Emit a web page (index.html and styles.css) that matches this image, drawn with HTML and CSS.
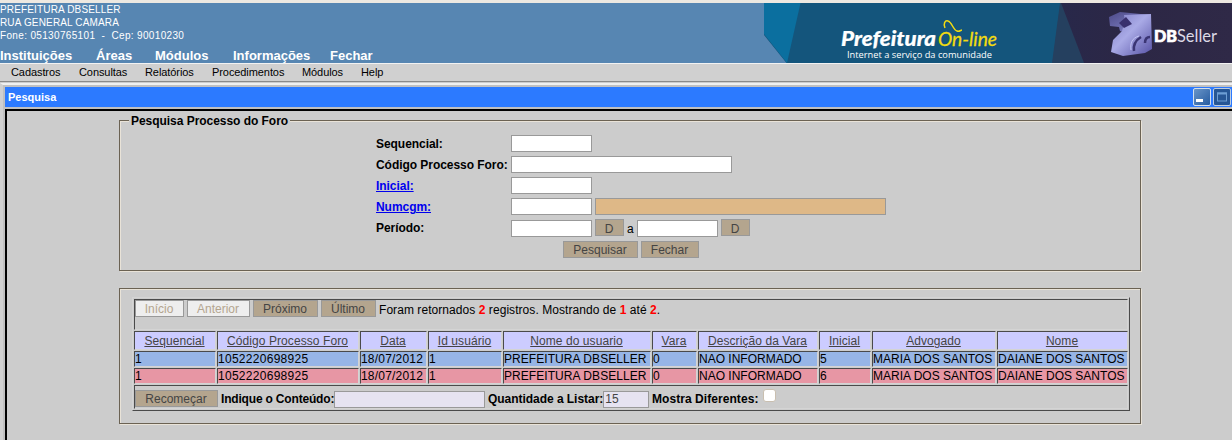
FILE: index.html
```html
<!DOCTYPE html>
<html lang="pt-BR">
<head>
<meta charset="utf-8">
<title>Pesquisa</title>
<link rel="stylesheet" href="styles.css">
</head>
<body>
<header class="top">
  <div class="top-left">
    <address class="org">PREFEITURA DBSELLER<br>RUA GENERAL CAMARA<br><span class="phone">Fone: 05130765101 &nbsp;-&nbsp; Cep: 90010230</span></address>
    <nav class="modules"><a>Instituições</a><a>Áreas</a><a>Módulos</a><a>Informações</a><a>Fechar</a></nav>
  </div>
  <svg class="banner" width="468" height="60" viewBox="764 3 468 60">
    <defs>
      <linearGradient id="night" x1="0" x2="1"><stop offset="0" stop-color="#28284a"/><stop offset=".4" stop-color="#2c2745"/><stop offset="1" stop-color="#2f2947"/></linearGradient>
      <linearGradient id="cube" x1="0" y1="0" x2="1" y2="1"><stop offset="0" stop-color="#7e7cc4"/><stop offset=".45" stop-color="#a9aae6"/><stop offset="1" stop-color="#5550a4"/></linearGradient>
      <linearGradient id="cubeSide" x1="0" y1="0" x2="1" y2="1"><stop offset="0" stop-color="#4d4a88"/><stop offset="1" stop-color="#8e90d6"/></linearGradient>
    </defs>
    <path fill="#14557c" d="M764 3h468v60H786.500L764 35z"/>
    <path fill="#0b6f9f" d="M764 3h36.500L787 63 764 34z"/>
    <path fill="#25405f" d="M1060 3h30v60h-38z"/>
    <path fill="url(#night)" d="M1061 3h171v60h-148z"/>
    <text class="brand-main" x="841" y="46" textLength="95" lengthAdjust="spacingAndGlyphs">Prefeitura</text>
    <text class="brand-on" x="938" y="46" textLength="59" lengthAdjust="spacingAndGlyphs">On-line</text>
    <path fill="none" stroke="#f3dc10" stroke-width="1.500" d="M945 28c-2-4 0-8 3-7 4 1 5 9 9 10 2 1 4-1 5-1"/>
    <text class="brand-tag" x="847" y="58" textLength="145" lengthAdjust="spacingAndGlyphs">Internet a serviço da comunidade</text>
    <path fill="url(#cubeSide)" d="M1109 17l11-5 31 3-21 4-3 14-7-2-1-4-9-1z"/>
    <path fill="url(#cube)" d="M1124 15l27-1 1 35-7 4-22 3-12-4 2-12 9-9 3-10z"/>
    <path fill="#39306e" d="M1126 17l6 7-8 4-5-5z"/>
    <path fill="none" stroke="#3b3574" stroke-width="2.500" d="M1134 51c-1-7 2-11 7-14M1145 43c0-4 2-6 5-6"/>
    <path fill="none" stroke="#c3c4f3" stroke-width="1" d="M1131 50c-1-7 1-12 8-14"/>
    <text class="brand-db" x="1154" y="42" textLength="23" lengthAdjust="spacingAndGlyphs">DB</text>
    <text class="brand-seller" x="1177" y="42" textLength="40" lengthAdjust="spacingAndGlyphs">Seller</text>
  </svg>
</header>
<nav class="menu"><a>Cadastros</a><a>Consultas</a><a>Relatórios</a><a>Procedimentos</a><a>Módulos</a><a>Help</a></nav>
<section class="window">
  <div class="titlebar">
    <span>Pesquisa</span>
    <svg class="winbtns" width="38" height="18" viewBox="0 0 38 18">
      <defs><linearGradient id="wb" x1="0" y1="0" x2="1" y2="1"><stop offset="0" stop-color="#6b96c9"/><stop offset="1" stop-color="#245a9f"/></linearGradient></defs>
      <rect x=".5" y=".5" width="17" height="17" rx="1.500" fill="url(#wb)" stroke="#d4e0ee"/>
      <rect x="3" y="11" width="7" height="3" fill="#fff"/>
      <rect x="20.500" y=".5" width="17" height="17" rx="1.500" fill="#265695" stroke="#bccde2"/>
      <rect x="24.500" y="5" width="9" height="8" fill="#265695" stroke="#6d9ed4"/>
      <path d="M24 5.500h10" stroke="#6d9ed4" stroke-width="2"/>
    </svg>
  </div>
  <main class="content">
    <form class="panel search">
      <h1 class="legend">Pesquisa Processo do Foro</h1>
      <div class="line"><label>Sequencial:</label><input class="short"></div>
      <div class="line"><label>Código Processo Foro:</label><input class="medium"></div>
      <div class="line"><label class="link">Inicial:</label><input class="short"></div>
      <div class="line"><label class="link">Numcgm:</label><input class="short"><input class="readonly" readonly></div>
      <div class="line period"><label>Período:</label><input class="short"><button type="button" class="date">D</button><span class="to">a</span><input class="short"><button type="button" class="date">D</button></div>
      <div class="actions"><button type="button" class="w75">Pesquisar</button><button type="button" class="w58">Fechar</button></div>
    </form>
    <section class="panel results">
      <table class="grid">
        <colgroup><col class="c1"><col class="c2"><col class="c3"><col class="c4"><col class="c5"><col class="c6"><col class="c7"><col class="c8"><col class="c9"><col class="c10"></colgroup>
        <tr class="nav-row"><td colspan="10"><div class="bar"><button disabled class="w49">Início</button><button disabled class="w63">Anterior</button><button class="w65">Próximo</button><button class="w55">Último</button><span>Foram retornados <b>2</b> registros. Mostrando de <b>1</b> até <b>2</b>.</span></div></td></tr>
        <tr class="head"><th>Sequencial</th><th>Código Processo Foro</th><th>Data</th><th>Id usuário</th><th>Nome do usuario</th><th>Vara</th><th>Descrição da Vara</th><th>Inicial</th><th>Advogado</th><th>Nome</th></tr>
        <tr class="blue"><td>1</td><td>1052220698925</td><td>18/07/2012</td><td>1</td><td>PREFEITURA DBSELLER</td><td>0</td><td>NAO INFORMADO</td><td>5</td><td>MARIA DOS SANTOS</td><td>DAIANE DOS SANTOS</td></tr>
        <tr class="pink"><td>1</td><td>1052220698925</td><td>18/07/2012</td><td>1</td><td>PREFEITURA DBSELLER</td><td>0</td><td>NAO INFORMADO</td><td>6</td><td>MARIA DOS SANTOS</td><td>DAIANE DOS SANTOS</td></tr>
        <tr class="filter-row"><td colspan="10"><div class="bar filter"><button class="w83">Recomeçar</button><label class="f1"><span>Indique o Conteúdo:</span><input class="term"></label><label class="f2"><span>Quantidade a Listar:</span><input class="qty" value="15"></label><label class="f3"><span>Mostra Diferentes:</span><input type="checkbox" class="check"></label></div></td></tr>
      </table>
    </section>
  </main>
</section>
</body>
</html>
```

FILE: styles.css
```css
* { box-sizing: border-box; }
body {
  margin: 0;
  height: 440px;
  overflow: hidden;
  display: flex;
  flex-direction: column;
  border-top: 3px solid #ede8e1;
  background: #ccc;
  color: #000;
  font: 12px/14px "Liberation Sans", Arial, sans-serif;
}
.top { display: flex; justify-content: space-between; flex: none; height: 60px; background: #5786b2; color: #fff; }
.top-left { display: flex; flex-direction: column; justify-content: space-between; }
.org { font: 10px/13px "Liberation Sans", Arial, sans-serif; letter-spacing: .15px; }
.phone { letter-spacing: .34px; }
.modules { display: grid; grid-template-columns: 96px 59px 78px 97px max-content; font-size: 13px; line-height: 15px; font-weight: bold; }
.banner { display: block; flex: none; }
.brand-main { font: italic 900 20px Lato, sans-serif; fill: #fff; stroke: #fff; stroke-width: .2px; }
.brand-on { font: italic 400 20px Lato, sans-serif; fill: #f3dc10; stroke: #f3dc10; stroke-width: .3px; }
.brand-tag { font: 9.500px "Open Sans", sans-serif; fill: #fff; }
.brand-db { font: 900 16.500px Lato, sans-serif; fill: #fff; stroke: #fff; stroke-width: .7px; }
.brand-seller { font: 400 17px Lato, sans-serif; fill: #dcdae6; }
.menu {
  display: grid;
  grid-template-columns: 68px 66px 67px 90px 59px max-content;
  flex: none;
  height: 19px;
  padding-left: 11px;
  border-top: 1px solid #f2f2f2;
  border-bottom: 1px solid #8a8a8a;
  background: #d0d0d0;
  font-size: 11px;
  line-height: 17px;
  letter-spacing: -.08px;
}
.window { flex: 1; margin-top: 1px; padding: 2px 0 0 2px; border-left: 3px solid #d0d0d0; border-top: 2px solid #f0f0f0; background: #c0c0c0; }
.titlebar { display: flex; align-items: flex-start; justify-content: space-between; height: 20px; padding: 1px 1px 0 3px; background: #2c7aff; color: #fff; font-size: 11px; font-weight: bold; line-height: 19px; }
.winbtns { display: block; }
.content { height: 331px; margin-top: 2px; padding: 9px 0 0 112px; border-top: 2px solid #000; border-left: 2px solid #000; background: #ccc; }
.panel { width: 1022px; border: 1px solid #6b6253; box-shadow: 1px 1px #e9e3d8, inset 1px 1px #e9e3d8; }
.search { height: 151px; margin: 0 0 17px; padding-left: 256px; }
.legend { width: max-content; height: 14px; margin: -7px 0 7px -247px; padding: 0 2px; background: #ccc; font: bold 12px/14px "Liberation Sans", Arial, sans-serif; letter-spacing: -.04px; }
.line { display: flex; gap: 3px; height: 21px; }
.line label { flex: none; width: 132px; font-weight: bold; line-height: 18px; letter-spacing: -.05px; white-space: nowrap; }
.line .link { color: #00e; text-decoration: underline; }
input { height: 17px; margin: 0; padding: 0 1px; border: 1px solid #999; background: #fff; color: #444; font: 12px/14px "Liberation Sans", Arial, sans-serif; }
.short { width: 81px; }
.medium { width: 221px; }
.readonly { width: 291px; background: #deb887; }
.period { height: 22px; }
.period input { margin-top: 1px; }
.to { width: 7px; line-height: 20px; }
button { height: 17px; margin: 0; padding: 1px 1px 0 0; border: 1px solid #999; background: #b4a58e; color: #444; font: 12px/14px "Liberation Sans", Arial, sans-serif; }
button:disabled { background: #eee; color: #b4a58e; }
.date { width: 29px; padding: 2px 1px 0 0; }
.actions { display: flex; gap: 3px; padding-left: 187px; }
.w75 { width: 75px; }
.w58 { width: 58px; }
.w49 { width: 49px; }
.w63 { width: 63px; }
.w65 { width: 65px; }
.w55 { width: 55px; }
.w83 { width: 83px; }
.results { height: 136px; padding: 8px 0 0 12px; }
.grid { table-layout: fixed; width: 998px; height: 114px; border: 1px solid; border-color: #d4d4d4 #4a4a4a #4a4a4a #d4d4d4; border-collapse: separate; border-spacing: 1px; }
.grid td, .grid th { padding: 0; border: 1px solid; border-color: #4a4a4a #d4d4d4 #d4d4d4 #4a4a4a; background-clip: padding-box; line-height: 14px; font-weight: normal; text-align: left; vertical-align: top; white-space: nowrap; overflow: hidden; }
.c1 { width: 82px; }
.c2 { width: 142px; }
.c3 { width: 67px; }
.c4 { width: 74px; }
.c5 { width: 148px; }
.c6 { width: 45px; }
.c7 { width: 120px; }
.c8 { width: 52px; }
.c9 { width: 124px; }
.c10 { width: 131px; }
.nav-row { height: 31px; }
.head { height: 19px; }
.blue, .pink { height: 16px; }
.filter-row { height: 24px; }
.grid th { padding: 2px 1px 0 0; height: 19px; background-color: #ccf; color: #444; text-align: center; text-decoration: underline; line-height: 15px; letter-spacing: .08px; }
.blue td { background-color: #97b5e6; }
.pink td { background-color: #e796a4; }
.blue td:nth-child(2), .pink td:nth-child(2) { letter-spacing: .28px; }
.blue td:nth-child(3), .pink td:nth-child(3) { letter-spacing: .2px; }
.blue td:nth-child(5), .pink td:nth-child(5) { letter-spacing: .06px; }
.bar { display: flex; gap: 3px; }
.bar > span { line-height: 20px; letter-spacing: .06px; }
.bar b { color: #f00; }
.filter { padding-top: 4px; height: 22px; }
.filter label { display: flex; flex: none; height: 18px; font-weight: bold; line-height: 18px; }
.filter label span { flex: none; letter-spacing: -.18px; }
.filter label input { flex: none; margin-top: 1px; background: #e6e3f1; }
.f1 { width: 264px; }
.f2 { width: 161px; }
.filter .f2 span { letter-spacing: -.04px; }
.filter .f3 span { letter-spacing: .06px; }
.filter .term { width: 151px; margin-left: auto; }
.filter .qty { width: 46px; margin-left: auto; padding-bottom: 2px; }
.filter .check { appearance: none; width: 13px; height: 13px; margin: -1px 0 0 5px; border: 1px solid #c9bfb0; border-radius: 3px; background: #fff; }
```
